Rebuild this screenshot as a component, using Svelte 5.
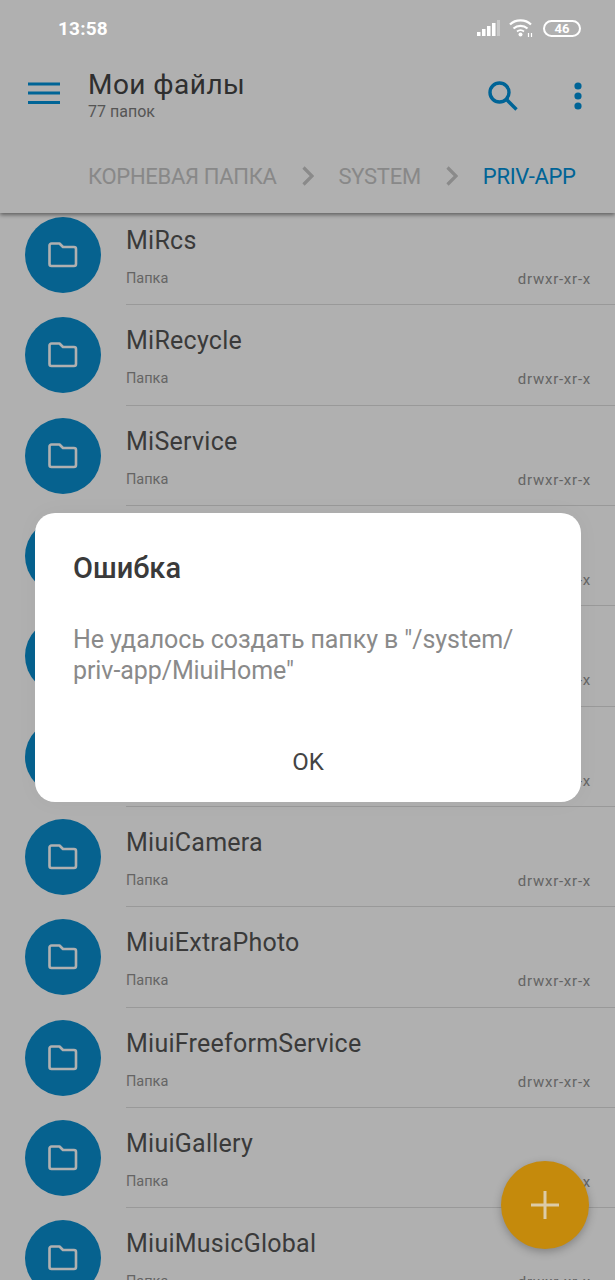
<script lang="ts">
  const folders = [
    "MiRcs",
    "MiRecycle",
    "MiService",
    "MiuiAod",
    "MiuiBluetooth",
    "MiuiBrowser",
    "MiuiCamera",
    "MiuiExtraPhoto",
    "MiuiFreeformService",
    "MiuiGallery",
    "MiuiMusicGlobal",
  ];
</script>

<div class="screen">
  <header class="top">
    <div class="status">
      <span class="clock">13:58</span>
      <div class="status-icons">
        <svg width="23" height="18" viewBox="0 0 23 18">
          <rect x="0" y="13" width="3.5" height="4" fill="#fff" />
          <rect x="5" y="10" width="3.5" height="7" fill="#fff" />
          <rect x="10" y="7" width="3.5" height="10" fill="#fff" />
          <rect x="15" y="4" width="3.5" height="13" fill="#fff" />
          <rect x="20" y="1" width="3" height="16" fill="#fff" opacity="0.3" />
        </svg>
        <svg width="25" height="20" viewBox="0 0 25 20" fill="none" stroke="#fff" stroke-width="2.2">
          <path d="M1 6.500C6.500 1 16.500 1 22 6.500" />
          <path d="M4.500 10.500C8.500 7 14.500 7 18.500 10.500" />
          <path d="M8 13.500C10 12 13 12 15 13.500" stroke-width="1.8" />
          <circle cx="11.500" cy="16.500" r="2" fill="#fff" stroke="none" />
          <path d="M19.500 15v4M22.500 15v4" stroke-width="1.2" />
        </svg>
        <div class="battery"><span>46</span></div>
      </div>
    </div>

    <div class="toolbar">
      <svg class="menu" width="32" height="24" viewBox="0 0 32 24" fill="none" stroke="#0091da" stroke-width="3.2">
        <path d="M0 3h32M0 12h32M0 21.500h32" />
      </svg>
      <div class="heading">
        <div class="title">Мои файлы</div>
        <div class="count">77 папок</div>
      </div>
      <svg class="search" width="30" height="30" viewBox="0 0 30 30" fill="none" stroke="#0091da" stroke-width="3.4">
        <circle cx="11.500" cy="11.500" r="9.500" />
        <path d="M18.500 18.500L28.500 28.500" />
      </svg>
      <svg class="dots" width="8" height="28" viewBox="0 0 8 28" fill="#0091da">
        <circle cx="4" cy="4" r="3.600" />
        <circle cx="4" cy="14" r="3.600" />
        <circle cx="4" cy="24" r="3.600" />
      </svg>
    </div>

    <div class="crumbs">
      <span class="crumb">КОРНЕВАЯ ПАПКА</span>
      <svg width="12" height="20" viewBox="0 0 12 20" fill="none" stroke="#c8c8c8" stroke-width="3.200">
        <path d="M1.500 1.500L10 10L1.500 18.500" />
      </svg>
      <span class="crumb">SYSTEM</span>
      <svg width="12" height="20" viewBox="0 0 12 20" fill="none" stroke="#c8c8c8" stroke-width="3.200">
        <path d="M1.500 1.500L10 10L1.500 18.500" />
      </svg>
      <span class="crumb current">PRIV-APP</span>
    </div>
  </header>

  <div class="list">
    {#each folders as name}
      <div class="row">
        <div class="avatar">
          <svg width="30" height="26" viewBox="0 0 30 26" fill="none" stroke="#fff" stroke-width="2.600" stroke-linejoin="round">
            <path d="M1.500 3.500a2 2 0 0 1 2-2h8l3.500 3.500h11a2 2 0 0 1 2 2v15a2 2 0 0 1-2 2h-22.500a2 2 0 0 1-2-2z" />
          </svg>
        </div>
        <div class="body">
          <div class="name">{name}</div>
          <div class="meta">
            <span>Папка</span>
            <span class="perm">drwxr-xr-x</span>
          </div>
        </div>
      </div>
    {/each}
  </div>

  <div class="scrim">
    <div class="dialog">
      <div class="dialog-title">Ошибка</div>
      <div class="dialog-text">Не удалось создать папку в "/system/<br />priv-app/MiuiHome"</div>
      <div class="dialog-ok">OK</div>
    </div>
  </div>

  <div class="fab">
    <svg width="28" height="28" viewBox="0 0 28 28" stroke="#dccba8" stroke-width="3">
      <path d="M14 0v28M0 14h28" />
    </svg>
  </div>
</div>

<style>
  :global(body) {
    margin: 0;
    background: #fff;
  }

  .screen {
    position: relative;
    width: 615px;
    height: 1280px;
    overflow: hidden;
    background: #fff;
    font-family: Roboto, "Noto Sans", sans-serif;
  }

  .top {
    position: relative;
    height: 213px;
    background: #fff;
    box-shadow: 0 2px 4px rgba(0, 0, 0, 0.45);
  }

  /* the system bar stays bright above the dialog scrim */
  .status {
    position: relative;
    z-index: 3;
    display: flex;
    align-items: center;
    justify-content: space-between;
    height: 56px;
    padding: 0 34px 0 58px;
  }

  .clock {
    color: #fff;
    font-size: 19px;
    font-weight: 700;
    letter-spacing: 0.2px;
  }

  .status-icons {
    display: flex;
    align-items: center;
    gap: 9px;
  }

  .battery {
    display: flex;
    align-items: center;
    justify-content: center;
    width: 34px;
    height: 13px;
    border: 2px solid #fff;
    border-radius: 9px;
    color: #fff;
    font-size: 13px;
    font-weight: 700;
  }

  .toolbar {
    display: flex;
    align-items: center;
    height: 74px;
    padding-left: 28px;
  }

  .menu {
    margin-right: 28px;
    flex-shrink: 0;
  }

  .heading {
    flex: 1;
  }

  .title {
    color: #444;
    font-size: 28px;
    line-height: 34px;
    margin-top: 3px;
    letter-spacing: 0.45px;
  }

  .count {
    margin-top: 1px;
    color: #7c7c7c;
    font-size: 16px;
    line-height: 18px;
  }

  .search {
    margin-right: 56px;
    margin-top: 6px;
  }

  .dots {
    margin-right: 33px;
    margin-top: 5px;
  }

  .crumbs {
    display: flex;
    align-items: center;
    gap: 25px;
    height: 52px;
    margin-top: 20px;
    padding-left: 88px;
    font-size: 22px;
    letter-spacing: -0.3px;
    white-space: nowrap;
  }

  .crumb {
    color: #c6c6c6;
  }

  .crumb.current {
    color: #0091da;
  }

  .list {
    margin-top: -8px;
  }

  .row {
    display: flex;
    height: 100.33px;
    padding-left: 25px;
    box-sizing: border-box;
  }

  .avatar {
    display: flex;
    align-items: center;
    justify-content: center;
    flex-shrink: 0;
    width: 76px;
    height: 76px;
    margin-top: 12px;
    border-radius: 50%;
    background: #0a8ecf;
  }

  .body {
    flex: 1;
    margin-left: 25px;
    padding: 21px 25px 0 0;
    border-bottom: 1px solid #dedede;
  }

  .name {
    color: #555;
    font-size: 25px;
    line-height: 30px;
    letter-spacing: 0.25px;
  }

  .meta {
    display: flex;
    justify-content: space-between;
    margin-top: 13px;
    color: #929292;
    font-size: 14.500px;
    line-height: 20px;
  }

  .perm {
    margin-right: -1px;
    font-size: 15px;
    letter-spacing: 0.75px;
  }

  .scrim {
    position: absolute;
    inset: 0;
    z-index: 2;
    display: flex;
    justify-content: center;
    align-items: flex-start;
    padding-top: 513px;
    box-sizing: border-box;
    background: rgba(0, 0, 0, 0.31);
  }

  .dialog {
    width: 546px;
    height: 289px;
    margin-left: 1px;
    padding: 0 38px;
    box-sizing: border-box;
    border-radius: 20px;
    background: #fff;
    box-shadow: 0 0 24px rgba(0, 0, 0, 0.03);
  }

  .dialog-title {
    margin-top: 36px;
    color: #3a3a3a;
    font-size: 29px;
    font-weight: 500;
    line-height: 38px;
  }

  .dialog-text {
    margin-top: 37px;
    color: #8a8a8a;
    font-size: 25px;
    line-height: 31px;
    letter-spacing: -0.08px;
  }

  .dialog-ok {
    margin-top: 60px;
    color: #444;
    font-size: 24px;
    line-height: 32px;
    text-align: center;
  }

  .fab {
    position: absolute;
    left: 501px;
    top: 1161px;
    z-index: 3;
    display: flex;
    align-items: center;
    justify-content: center;
    width: 88px;
    height: 88px;
    border-radius: 50%;
    background: #c58a0c;
    box-shadow: 0 3px 8px rgba(0, 0, 0, 0.25);
  }
</style>
